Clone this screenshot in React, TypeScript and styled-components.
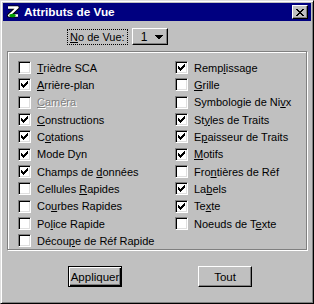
import React from "react";
import styled, { createGlobalStyle } from "styled-components";

const GlobalStyle = createGlobalStyle`
  html, body { margin: 0; padding: 0; background: #c0c0c0; }
  body { font-family: "Liberation Sans", Arial, sans-serif; font-size: 11px; color: #000; }
`;

const Window = styled.div`
  width: 314px;
  height: 304px;
  box-sizing: border-box;
  background: #c0c0c0;
  border: 1px solid;
  border-color: #dfdfdf #000 #000 #dfdfdf;
  box-shadow: inset 1px 1px #fff, inset -1px -1px #808080;
  padding: 2px;
  display: flex;
  flex-direction: column;
`;

const TitleBar = styled.div`
  height: 18px;
  background: #000080;
  display: flex;
  align-items: center;
  padding: 0 3px 0 2px;
  color: #fff;
  font-weight: bold;
  font-size: 11.8px;
`;

const TitleIcon = styled.svg`
  width: 16px;
  height: 16px;
  margin-right: 3px;
  flex: none;
`;

const CloseButton = styled.div`
  margin-left: auto;
  width: 16px;
  height: 14px;
  box-sizing: border-box;
  background: #c0c0c0;
  border: 1px solid;
  border-color: #fff #000 #000 #fff;
  box-shadow: inset -1px -1px #808080;
  display: flex;
  align-items: center;
  justify-content: center;
`;

const ViewRow = styled.div`
  margin-top: 7px;
  padding-left: 64px;
  display: flex;
  align-items: center;
  gap: 4px;
  height: 17px;
`;

const FocusLabel = styled.div`
  border: 1px dotted #000;
  height: 16px;
  box-sizing: border-box;
  padding: 0 2px;
  display: flex;
  align-items: center;
`;

const Dropdown = styled.div`
  width: 36px;
  height: 17px;
  box-sizing: border-box;
  border: 1px solid;
  border-color: #fff #000 #000 #fff;
  box-shadow: inset -1px -1px #808080;
  display: flex;
  align-items: center;
  padding-left: 8px;
  gap: 8px;
  font-size: 12px;
`;

const Group = styled.div`
  margin: 6px 4px 0 4px;
  height: 199px;
  box-sizing: border-box;
  border: 1px solid #808080;
  box-shadow: 1px 1px 0 #fff, inset 1px 1px 0 #fff;
  padding: 7px 0 0 10px;
  display: grid;
  grid-template-columns: 157px 1fr;
  grid-template-rows: repeat(11, 17.33px);
  grid-auto-flow: column;
`;

const Item = styled.div`
  display: flex;
  align-items: center;
  gap: 6px;
  white-space: nowrap;
`;

const Box = styled.div`
  width: 13px;
  height: 13px;
  box-sizing: border-box;
  flex: none;
  border: 1px solid;
  border-color: #808080 #fff #fff #808080;
  box-shadow: inset 1px 1px #000, inset -1px -1px #dfdfdf;
  background: #fff;
  display: flex;
  align-items: center;
  justify-content: center;
`;

const Label = styled.span<{ $disabled?: boolean }>`
  color: ${(p) => (p.$disabled ? "#808080" : "#000")};
  text-shadow: ${(p) => (p.$disabled ? "1px 1px 0 #fff" : "none")};
`;

const Mn = styled.span`
  text-decoration: underline;
`;

const ButtonRow = styled.div`
  margin-top: 16px;
  padding-left: 65px;
  display: flex;
  gap: 76px;
`;

const Button = styled.div<{ $default?: boolean }>`
  width: 54px;
  height: 21px;
  box-sizing: border-box;
  display: flex;
  align-items: center;
  justify-content: center;
  font-size: 11.5px;
  border: 1px solid;
  border-color: ${(p) => (p.$default ? "#000" : "#fff #000 #000 #fff")};
  box-shadow: ${(p) =>
    p.$default
      ? "inset 1px 1px #fff, inset -1px -1px #000, inset -2px -2px #808080"
      : "inset -1px -1px #808080"};
`;

const Check = () => (
  <svg width="7" height="7" viewBox="0 0 7 7" shapeRendering="crispEdges">
    <path
      fill="#000"
      d="M6 0h1v3h-1z M5 1h1v3h-1z M4 2h1v3h-1z M3 3h1v3h-1z M2 4h1v3h-1z M1 3h1v3h-1z M0 2h1v3h-1z"
    />
  </svg>
);

type Entry = { t: [string, string, string]; c: boolean; d?: boolean };

const entries: Entry[] = [
  { t: ["", "T", "rièdre SCA"], c: false },
  { t: ["", "A", "rrière-plan"], c: true },
  { t: ["", "C", "améra"], c: false, d: true },
  { t: ["", "C", "onstructions"], c: true },
  { t: ["C", "o", "tations"], c: true },
  { t: ["Mode Dyn", "", ""], c: true },
  { t: ["Champs de ", "d", "onnées"], c: true },
  { t: ["Cellules ", "R", "apides"], c: false },
  { t: ["Co", "u", "rbes Rapides"], c: false },
  { t: ["Po", "l", "ice Rapide"], c: false },
  { t: ["Décou", "p", "e de Réf Rapide"], c: false },
  { t: ["Remp", "l", "issage"], c: true },
  { t: ["", "G", "rille"], c: false },
  { t: ["Symbologie de Ni", "v", "x"], c: false },
  { t: ["St", "y", "les de Traits"], c: true },
  { t: ["E", "p", "aisseur de Traits"], c: true },
  { t: ["", "M", "otifs"], c: true },
  { t: ["Fro", "n", "tières de Réf"], c: false },
  { t: ["La", "b", "els"], c: true },
  { t: ["Te", "x", "te"], c: true },
  { t: ["Noeuds de T", "e", "xte"], c: false },
];

export default function App() {
  return (
    <>
      <GlobalStyle />
      <Window>
        <TitleBar>
          <TitleIcon viewBox="0 0 16 16">
            <path d="M3 3.5H12.5L4 11.5H13" fill="none" stroke="#000" strokeWidth="4.2" strokeLinejoin="round" />
            <path d="M3 3.5H12.5L4 11.5H13" fill="none" stroke="#fff" strokeWidth="2.4" strokeLinejoin="round" />
            <ellipse cx="7.5" cy="11.5" rx="3.2" ry="1.8" fill="#00a000" />
          </TitleIcon>
          Attributs de Vue
          <CloseButton>
            <svg width="8" height="7" viewBox="0 0 8 7" shapeRendering="crispEdges">
              <path
                fill="#000"
                d="M0 0h2v1h-2z M6 0h2v1h-2z M1 1h2v1h-2z M5 1h2v1h-2z M2 2h4v1h-4z M3 3h2v1h-2z M2 4h4v1h-4z M1 5h2v1h-2z M5 5h2v1h-2z M0 6h2v1h-2z M6 6h2v1h-2z"
              />
            </svg>
          </CloseButton>
        </TitleBar>
        <ViewRow>
          <FocusLabel>
            <Mn>N</Mn>o de Vue:
          </FocusLabel>
          <Dropdown>
            1
            <svg width="8" height="4" viewBox="0 0 8 4" shapeRendering="crispEdges">
              <path fill="#000" d="M0 0h8v1h-8z M1 1h6v1h-6z M2 2h4v1h-4z M3 3h2v1h-2z" />
            </svg>
          </Dropdown>
        </ViewRow>
        <Group>
          {entries.map((e, i) => (
            <Item key={i}>
              <Box>{e.c && <Check />}</Box>
              <Label $disabled={e.d}>
                {e.t[0]}
                {e.t[1] && <Mn>{e.t[1]}</Mn>}
                {e.t[2]}
              </Label>
            </Item>
          ))}
        </Group>
        <ButtonRow>
          <Button $default>Appliquer</Button>
          <Button>Tout</Button>
        </ButtonRow>
      </Window>
    </>
  );
}
